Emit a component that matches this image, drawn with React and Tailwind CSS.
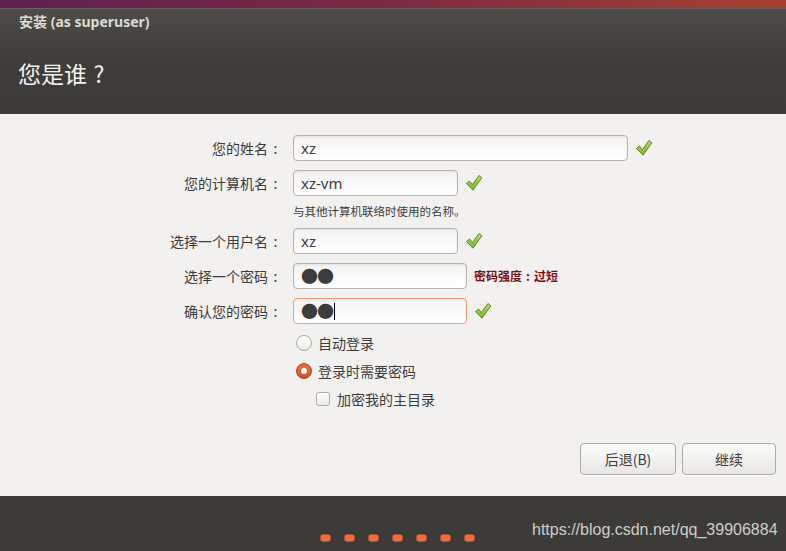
import React from 'react'

const font = { fontFamily: '"Noto Sans", "Noto Sans CJK SC", sans-serif' }
const cjk = { fontFamily: '"Noto Sans CJK SC", "Noto Sans", sans-serif' }

const Check = () => (
    <svg width="18" height="18" viewBox="0 0 18 18" className="shrink-0">
        <defs>
            <linearGradient id="ck" x1="0" y1="0" x2="0" y2="1">
                <stop offset="0" stopColor="#b5dc6a" />
                <stop offset="1" stopColor="#7fb032" />
            </linearGradient>
        </defs>
        <path
            d="M1.5 9.5 L4.5 7 L7.5 10.5 L14 1.5 L16.8 3.8 L8 16.2 Z"
            fill="url(#ck)"
            stroke="#5f8a22"
            strokeWidth="1"
            strokeLinejoin="round"
        />
    </svg>
)

const Colon = () => <span className="inline-block w-[15px] text-center">:</span>

const Field = ({ width, children, warn }) => (
    <div
        className={`h-[26px] ${width} rounded-[4px] border ${warn ? 'border-[#ee9f7c]' : 'border-[#b7b4af]'} bg-gradient-to-b from-[#f4f3f2] to-[#ffffff] shadow-[inset_0_1px_2px_rgba(0,0,0,0.08)] flex items-center px-[7px] text-[15px] text-[#3c3c3c]`}
    >
        {children}
    </div>
)

const Row = ({ label, children }) => (
    <div className="flex items-center h-[26px]">
        <div className="w-[283px] text-right text-[14px] text-[#3c3c3c]" style={cjk}>
            {label}<Colon />
        </div>
        <div className="ml-[10px] flex items-center gap-[7px]">{children}</div>
    </div>
)

const Dots = () => <span className="tracking-[-1px] text-[17px] leading-none">●●</span>

export default function App() {
    return (
        <div className="w-[786px] h-[551px] flex flex-col bg-[#f2f1f0] overflow-hidden relative" style={font}>
            {/* desktop strip */}
            <div className="h-[8px] bg-gradient-to-r from-[#5c2151] via-[#7d2a42] to-[#a8402c]" />

            {/* header */}
            <div className="h-[106px] bg-gradient-to-b from-[#4d4c48] via-[#3e3d39] to-[#3c3b37] border-t border-[#66645f] flex flex-col px-[19px]">
                <div className="mt-[3px] text-[14px] font-bold text-[#dfdbd2] leading-[20px]">安装 (as superuser)</div>
                <div className="mt-[24px] ml-[-1px] text-[23px] text-[#f2f1f0] leading-[34px]" style={cjk}>
                    您是谁<span className="inline-block w-[24px] text-center">?</span>
                </div>
            </div>

            {/* body */}
            <div className="flex-1 flex flex-col pt-[21px]">
                <div className="flex flex-col gap-[9px]">
                    <Row label="您的姓名">
                        <Field width="w-[335px]">xz</Field>
                        <Check />
                    </Row>
                    <Row label="您的计算机名">
                        <Field width="w-[165px]">xz-vm</Field>
                        <Check />
                    </Row>
                    <div className="pl-[293px] h-[14px] flex items-center text-[11.5px] text-[#3c3c3c]" style={cjk}>
                        与其他计算机联络时使用的名称。
                    </div>
                    <Row label="选择一个用户名">
                        <Field width="w-[165px]">xz</Field>
                        <Check />
                    </Row>
                    <Row label="选择一个密码">
                        <Field width="w-[174px]"><Dots /></Field>
                        <span className="text-[12px] font-bold text-[#7f0f0f]" style={cjk}>
                            密码强度<span className="inline-block w-[12px] text-center">:</span>过短
                        </span>
                    </Row>
                    <Row label="确认您的密码">
                        <Field width="w-[174px]" warn>
                            <Dots />
                            <span className="w-px h-[17px] bg-black ml-[1px]" />
                        </Field>
                        <Check />
                    </Row>
                </div>

                <div className="pl-[296px] mt-[11px] flex flex-col gap-[12px] text-[14px] text-[#3c3c3c]" style={cjk}>
                    <label className="flex items-center h-[16px] gap-[6px]">
                        <span className="w-[16px] h-[16px] rounded-full border border-[#aeaba6] bg-gradient-to-b from-[#ffffff] to-[#ebeae8]" />
                        自动登录
                    </label>
                    <label className="flex items-center h-[16px] gap-[6px]">
                        <span className="w-[16px] h-[16px] rounded-full border border-[#a9471f] bg-gradient-to-b from-[#e8744a] to-[#cf4f20] flex items-center justify-center">
                            <span className="w-[6px] h-[6px] rounded-full bg-white" />
                        </span>
                        登录时需要密码
                    </label>
                    <label className="flex items-center h-[16px] gap-[7px] pl-[20px]">
                        <span className="w-[14px] h-[14px] rounded-[3px] border border-[#aeaba6] bg-gradient-to-b from-[#ffffff] to-[#ebeae8]" />
                        加密我的主目录
                    </label>
                </div>

                <div className="flex-1" />

                <div className="flex justify-end gap-[6px] pr-[10px] mb-[21px]" style={cjk}>
                    <button className="w-[96px] h-[32px] rounded-[4px] border border-[#aeaba6] bg-gradient-to-b from-[#fbfbfa] to-[#e8e7e5] text-[14px] text-[#3c3c3c] shadow-[0_1px_0_rgba(255,255,255,0.8)]">
                        后退(B)
                    </button>
                    <button className="w-[94px] h-[32px] rounded-[4px] border border-[#aeaba6] bg-gradient-to-b from-[#fbfbfa] to-[#e8e7e5] text-[14px] text-[#3c3c3c] shadow-[0_1px_0_rgba(255,255,255,0.8)]">
                        继续
                    </button>
                </div>
            </div>

            {/* footer */}
            <div className="h-[55px] bg-[#3c3b37] flex items-end justify-start pl-[320px] pb-[9px]">
                <div className="flex gap-[13px]">
                    {[0, 1, 2, 3, 4, 5, 6].map(i => (
                        <span key={i} className="w-[11px] h-[8px] rounded-[3px] bg-[#ea6d3e] border border-[#b24e2a]" />
                    ))}
                </div>
            </div>

            {/* watermark */}
            <div
                className="absolute left-[532px] top-[520px] text-[16px] text-[#cfcdc9] leading-[20px]"
                style={{ fontFamily: '"Liberation Sans", Arial, sans-serif' }}
            >
                https://blog.csdn.net/qq_39906884
            </div>
        </div>
    )
}
